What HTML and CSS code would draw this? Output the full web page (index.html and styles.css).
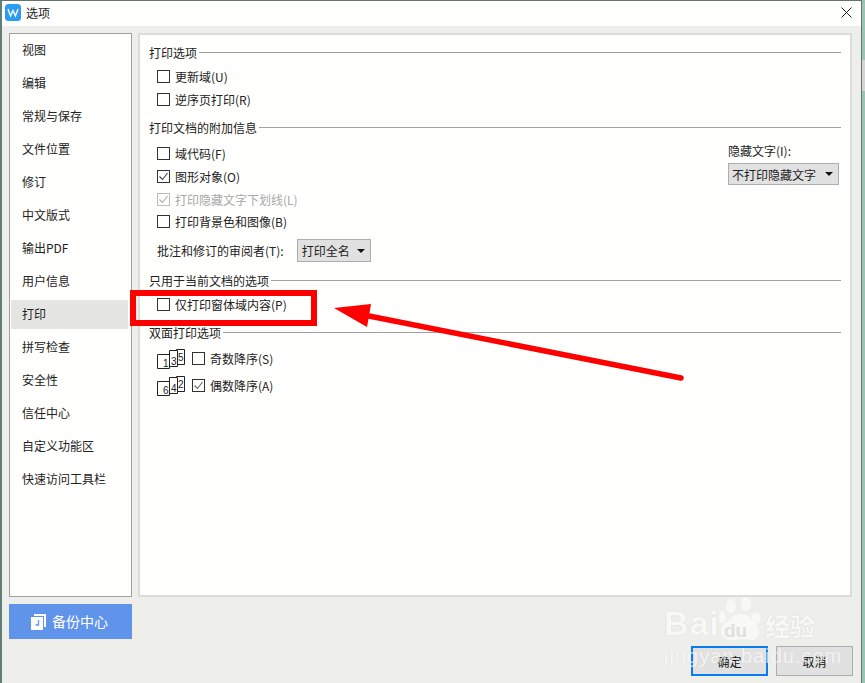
FILE: index.html
```html
<!DOCTYPE html>
<html lang="zh">
<head>
<meta charset="utf-8">
<title>选项</title>
<link rel="stylesheet" href="styles.css">
</head>
<body>
<div class="screen">
  <div class="window">
    <header class="titlebar">
      <svg class="app-icon" viewBox="0 0 16 17"><rect width="16" height="17" rx="3.5" fill="#2b9cf2"/><path d="M3 5l2.6 7L8 6.5 10.4 12 13 5" fill="none" stroke="#fff" stroke-width="1.4"/></svg>
      <span class="title">选项</span>
      <svg class="close" viewBox="0 0 11 11"><path d="M.5.5l10 10M10.500.5l-10 10" stroke="#222" stroke-width="1" fill="none"/></svg>
    </header>
    <div class="body">
      <div class="columns">
        <div class="side">
          <nav class="sidebar">
            <div class="nav-item">视图</div>
            <div class="nav-item">编辑</div>
            <div class="nav-item">常规与保存</div>
            <div class="nav-item">文件位置</div>
            <div class="nav-item">修订</div>
            <div class="nav-item">中文版式</div>
            <div class="nav-item">输出PDF</div>
            <div class="nav-item">用户信息</div>
            <div class="nav-item selected">打印</div>
            <div class="nav-item">拼写检查</div>
            <div class="nav-item">安全性</div>
            <div class="nav-item">信任中心</div>
            <div class="nav-item">自定义功能区</div>
            <div class="nav-item">快速访问工具栏</div>
          </nav>
        </div>
        <main class="panel">
          <div class="heading first">打印选项</div>
          <div class="rows r1">
            <label class="row"><span class="box"></span>更新域(U)</label>
            <label class="row"><span class="box"></span>逆序页打印(R)</label>
          </div>
          <div class="heading h2">打印文档的附加信息</div>
          <div class="split">
            <div class="rows">
              <label class="row"><span class="box"></span>域代码(F)</label>
              <label class="row"><span class="box"><svg viewBox="0 0 11 11"><path d="M1.500 5.500l3 3 5-6.500" fill="none" stroke="#444" stroke-width="1.100"/></svg></span>图形对象(O)</label>
              <label class="row disabled"><span class="box"><svg viewBox="0 0 11 11"><path d="M1.500 5.500l3 3 5-6.500" fill="none" stroke="#aaa" stroke-width="1.100"/></svg></span>打印隐藏文字下划线(L)</label>
              <label class="row"><span class="box"></span>打印背景色和图像(B)</label>
              <div class="reviewer">
                <span>批注和修订的审阅者(T):</span>
                <div class="select sel-name">打印全名<i class="caret"></i></div>
              </div>
            </div>
            <div class="hidden-text">
              <div class="hidden-label">隐藏文字(I):</div>
              <div class="select sel-hidden">不打印隐藏文字<i class="caret"></i></div>
            </div>
          </div>
          <div class="heading h3">只用于当前文档的选项</div>
          <div class="rows r1">
            <label class="row"><span class="box"></span>仅打印窗体域内容(P)</label>
          </div>
          <div class="heading h4">双面打印选项</div>
          <div class="duplex">
            <div class="duplex-row">
              <svg class="pages" viewBox="0 0 29 20"><path class="pg" d="M19.500 .5h8v15h-8z"/><path class="pg" d="M12.500 1.500h8v16h-8z"/><path class="pg" d="M.5 5.500h12v14H.5z"/><text x="6" y="18">1</text><text x="14" y="16">3</text><text x="21" y="12">5</text></svg>
              <span class="box"></span>奇数降序(S)
            </div>
            <div class="duplex-row">
              <svg class="pages" viewBox="0 0 29 20"><path class="pg" d="M19.500 .5h8v15h-8z"/><path class="pg" d="M12.500 1.500h8v16h-8z"/><path class="pg" d="M.5 5.500h12v14H.5z"/><text x="6" y="18">6</text><text x="14" y="16">4</text><text x="21" y="12">2</text></svg>
              <span class="box"><svg viewBox="0 0 11 11"><path d="M1.500 5.500l3 3 5-6.500" fill="none" stroke="#666" stroke-width="1.100"/></svg></span>偶数降序(A)
            </div>
          </div>
        </main>
      </div>
      <div class="footer">
        <button class="backup">
          <svg viewBox="0 0 15 16"><path d="M3 0h12v13h-2V2H3z" fill="#fff"/><path d="M0 3h12v13H0z" fill="#fff"/><path d="M7.500 6v5H4.500" fill="none" stroke="#5f94ea" stroke-width="1.300"/></svg>
          <span class="backup-label">备份中心</span>
        </button>
        <div class="actions">
          <button class="btn primary">确定</button>
          <button class="btn">取消</button>
        </div>
      </div>
    </div>
  </div>
  <div class="edge"><div class="edge-gray"></div></div>

  <div class="redbox"></div>
  <svg class="arrow" viewBox="0 0 865 683">
    <path d="M369 316L681 378" stroke="#f00" stroke-width="5.500" stroke-linecap="round" fill="none"/>
    <path d="M334 308L371 304L369 316L367 327Z" fill="#f00"/>
  </svg>

  <div class="watermark">
    <span class="wm-bai">Bai</span>
    <svg class="wm-paw" viewBox="0 0 44 52">
      <ellipse cx="12" cy="12" rx="5" ry="7"/><ellipse cx="27" cy="10" rx="5" ry="7"/>
      <ellipse cx="3.500" cy="23" rx="3.500" ry="6"/><ellipse cx="37" cy="24" rx="4.500" ry="6"/>
      <path d="M22 20c8 0 9 5 14 9 7 6 5 17-4 17-4 0-6-1-10-1s-7 2-12 1c-9-1-10-11-4-17 6-4 7-9 16-9z"/>
      <text x="5" y="43">du</text>
    </svg>
    <span class="wm-cn">经验</span>
    <span class="wm-url">jingyan.baidu.com</span>
  </div>
</div>
</body>
</html>
```
FILE: styles.css
```css
* { box-sizing: border-box; }
html, body { margin: 0; padding: 0; }
body {
  width: 865px;
  height: 683px;
  overflow: hidden;
  font-family: "Noto Sans CJK SC", "Noto Sans", sans-serif;
  font-size: 12px;
  color: #222;
}
.screen {
  position: relative;
  display: flex;
  width: 865px;
  height: 683px;
  background: #9cc4b4;
  overflow: hidden;
}
.window {
  width: 862px;
  height: 683px;
  background: #eeeeeb;
  border-left: 2px solid #62807a;
  border-right: 1px solid #66746e;
  border-top: 1px solid #66746e;
  display: flex;
  flex-direction: column;
}
.edge { flex: 1; padding-top: 60px; }
.edge-gray { height: 31px; background: #d4d4d4; }

.titlebar {
  height: 25px;
  flex: none;
  background: #fffffd;
  display: flex;
  align-items: center;
  padding: 0 9px 2px 3px;
}
.app-icon { width: 16px; height: 17px; flex: none; }
.title { margin-left: 5px; flex: 1; line-height: 18px; }
.close { width: 11px; height: 11px; flex: none; }

.body { flex: 1; padding: 7px 8px 0 7px; display: flex; flex-direction: column; }
.columns { display: flex; gap: 6px; height: 564px; flex: none; }
.side { width: 123px; flex: none; }
.sidebar {
  height: 100%;
  background: #fffffd;
  border: 1px solid #a0a09c;
  padding: 2px 3px 0 1px;
  display: flex;
  flex-direction: column;
  gap: 4px;
}
.nav-item { height: 29px; line-height: 27px; padding-left: 11px; flex: none; }
.nav-item.selected { background: #e5e5e3; }

.panel {
  width: 714px;
  flex: none;
  background: #fffffd;
  border: 2px solid #dcdcd8;
  padding: 9px 9px 0 9px;
}
.heading {
  display: flex;
  align-items: center;
  gap: 2px;
  height: 18px;
  line-height: 18px;
}
.heading::after { content: ""; flex: 1; height: 1px; background: #a0a09c; margin-top: -1px; }
.h2 { margin-top: 8px; }
.h3 { margin-top: 10px; }
.h4 { margin-top: 8px; }
.r1 { margin-top: 3px; margin-bottom: 1px; }
.rows { display: flex; flex-direction: column; }
.row {
  height: 23px;
  display: flex;
  align-items: center;
  padding-left: 8px;
  gap: 5px;
}
.box {
  width: 13px;
  height: 13px;
  flex: none;
  border: 1px solid #333;
  background: #fffffd;
  display: block;
}
.box svg { display: block; width: 11px; height: 11px; }
.disabled { color: #a8a8a8; height: 22px; }
.disabled .box { border-color: #bcbcbc; }

.split { display: flex; justify-content: space-between; margin-top: 5px; }
.reviewer { display: flex; align-items: center; margin-top: 6px; height: 23px; gap: 13px; padding-left: 8px; }
.select {
  background: #e1e1e1;
  border: 1px solid #adadad;
  display: flex;
  align-items: center;
  justify-content: space-between;
  padding: 0 4px 0 4px;
}
.sel-name { width: 74px; height: 23px; }
.sel-hidden { width: 111px; height: 22px; margin-top: 3px; padding-left: 3px; }
.caret {
  width: 0;
  height: 0;
  border-left: 4px solid transparent;
  border-right: 4px solid transparent;
  border-top: 4px solid #111;
  margin-right: 1px;
}
.hidden-text { padding-right: 2px; }
.hidden-label { height: 18px; line-height: 18px; }

.duplex { margin-top: 3px; }
.duplex-row {
  height: 27px;
  display: flex;
  align-items: center;
  padding-left: 8px;
  gap: 5px;
}
.pages { width: 29px; height: 20px; flex: none; margin-right: 1px; }
.pg { fill: #fffffd; stroke: #222; stroke-width: 1; }
.pages text { font-size: 10px; fill: #222; font-family: "Liberation Sans", sans-serif; }

.footer { display: flex; justify-content: space-between; align-items: flex-start; }
.backup {
  width: 123px;
  height: 35px;
  margin-top: 7px;
  background: #5f94ea;
  border: 0;
  color: #fff;
  font: 14px "Noto Sans CJK SC", sans-serif;
  display: flex;
  align-items: center;
  padding: 0 0 0 22px;
  gap: 6px;
}
.backup svg { width: 15px; height: 16px; flex: none; }
.backup-label { margin-top: -2px; }
.actions { display: flex; gap: 8px; margin-top: 49px; }
.btn {
  width: 77px;
  height: 30px;
  background: #e1e1e1;
  border: 1px solid #adadad;
  color: #111;
  font: 12px "Noto Sans CJK SC", sans-serif;
  padding: 0;
}
.primary { border: 2px solid #0a7cf0; }

.redbox {
  position: absolute;
  left: 130px;
  top: 290px;
  width: 187px;
  height: 36px;
  border: 6px solid #f00;
}
.arrow { position: absolute; left: 0; top: 0; width: 865px; height: 683px; pointer-events: none; }

.watermark { position: absolute; left: 0; top: 0; width: 865px; height: 683px; pointer-events: none; color: #fff; opacity: .6; }
.wm-bai, .wm-cn, .wm-url, .wm-paw { position: absolute; white-space: nowrap; }
.wm-bai, .wm-cn { text-shadow: 0 0 1px #b8b8b4; }
.wm-url { text-shadow: 0 0 1px #c8c8c4; }
.wm-bai { left: 664px; top: 601px; font: bold 34px/44px "Liberation Sans", sans-serif; letter-spacing: 1px; }
.wm-paw { left: 719px; top: 594px; width: 44px; height: 52px; fill: #fff; }
.wm-paw text { font: bold 19px "Liberation Sans", sans-serif; fill: #d8d8d4; }
.wm-cn { left: 765px; top: 607px; font: bold 25px/36px "Noto Sans CJK SC", sans-serif; }
.wm-url { left: 664px; top: 643px; font: 20px/26px "Liberation Sans", sans-serif; letter-spacing: 1px; }
```
